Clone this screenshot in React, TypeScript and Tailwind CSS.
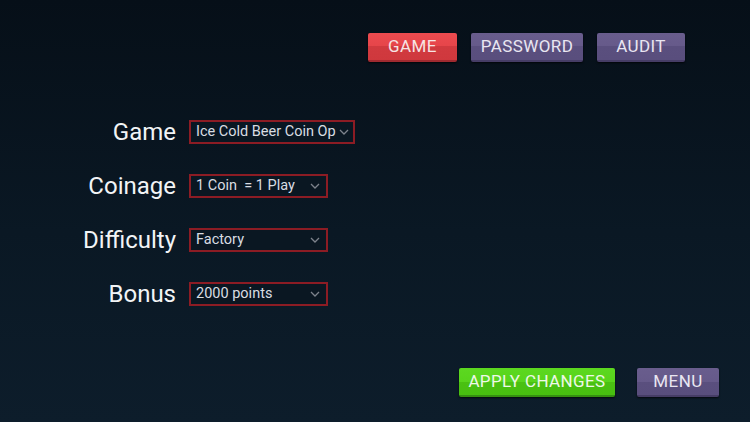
import React from "react";

const Chevron = () => (
  <svg width="10" height="6" viewBox="0 0 10 6" className="shrink-0">
    <path d="M1 1 L5 5 L9 1" fill="none" stroke="#7d838c" strokeWidth="1.3" />
  </svg>
);

const btnBase =
  "h-[29px] flex items-center justify-center pt-[1px] rounded-[2px] text-[17px] tracking-[0.4px] shadow-[0_1px_2px_rgba(0,0,0,0.7)]";

function Select({ value, wide }: { value: string; wide?: boolean }) {
  return (
    <div
      className={`${wide ? "w-[166px]" : "w-[139px]"} h-[24px] border-2 border-[#8c1c24] bg-[#0a1722] flex items-center justify-between pl-[5px] ${wide ? "pr-[4px]" : "pr-[6px]"}`}
    >
      <span className="text-[14.5px] text-[#d9dde2] leading-none whitespace-pre">{value}</span>
      <Chevron />
    </div>
  );
}

export default function App() {
  const rows: { label: string; value: string; wide?: boolean }[] = [
    { label: "Game", value: "Ice Cold Beer Coin Op", wide: true },
    { label: "Coinage", value: "1 Coin  = 1 Play" },
    { label: "Difficulty", value: "Factory" },
    { label: "Bonus", value: "2000 points" },
  ];
  return (
    <div
      className="w-[750px] h-[422px] flex flex-col bg-[linear-gradient(to_bottom,#060f18_0%,#0a1824_55%,#0d1d2b_100%)] overflow-hidden"
      style={{ fontFamily: "Roboto, 'Liberation Sans', sans-serif" }}
    >
      <div className="flex justify-end pt-[33px] pr-[65px] gap-[14px]">
        <div
          className={`${btnBase} w-[89px] text-[#f6e4e4] bg-[linear-gradient(to_bottom,#ec4b4f_0%,#e6454a_50%,#d13a3f_50%,#cf383d_100%)] border-b-2 border-[#a02a30]`}
        >
          GAME
        </div>
        <div
          className={`${btnBase} w-[112px] text-[#e9e6f1] bg-[linear-gradient(to_bottom,#695d8d_0%,#665a8a_50%,#5a4f7e_50%,#594e7d_100%)] border-b-2 border-[#463d66]`}
        >
          PASSWORD
        </div>
        <div
          className={`${btnBase} w-[88px] text-[#e9e6f1] bg-[linear-gradient(to_bottom,#695d8d_0%,#665a8a_50%,#5a4f7e_50%,#594e7d_100%)] border-b-2 border-[#463d66]`}
        >
          AUDIT
        </div>
      </div>

      <div className="mt-[58px] grid grid-cols-[176px_auto] gap-x-[13px] gap-y-[30px] items-center justify-start">
        {rows.map((r) => (
          <React.Fragment key={r.label}>
            <div className="text-right text-[24px] leading-[24px] text-[#f2f4f6]">{r.label}</div>
            <Select value={r.value} wide={r.wide} />
          </React.Fragment>
        ))}
      </div>

      <div className="mt-auto flex justify-end pr-[31px] pb-[25px] gap-[22px]">
        <div
          className={`${btnBase} w-[156px] text-[#eef8e8] bg-[linear-gradient(to_bottom,#5cd820_0%,#58d41c_50%,#4ac112_50%,#48bf10_100%)] border-b-2 border-[#359010]`}
        >
          APPLY CHANGES
        </div>
        <div
          className={`${btnBase} w-[82px] text-[#e9e6f1] bg-[linear-gradient(to_bottom,#695d8d_0%,#665a8a_50%,#5a4f7e_50%,#594e7d_100%)] border-b-2 border-[#463d66]`}
        >
          MENU
        </div>
      </div>
    </div>
  );
}
